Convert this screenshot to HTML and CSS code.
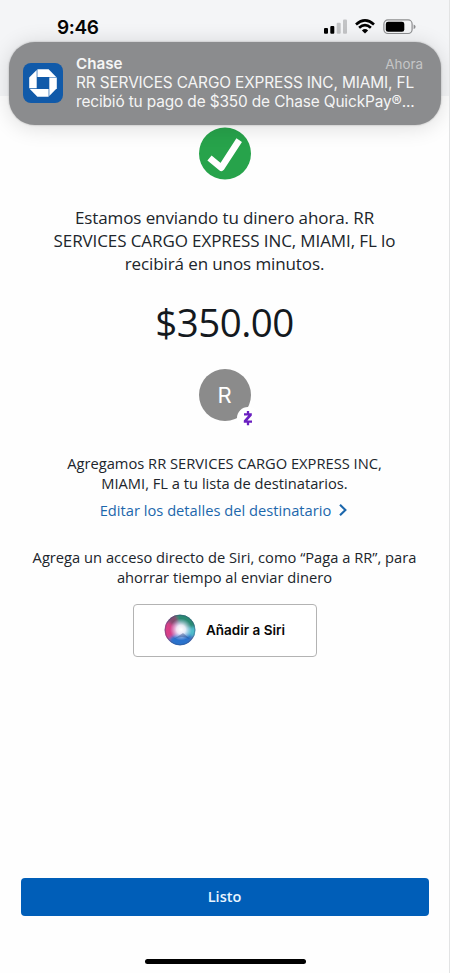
FILE: index.html
```html
<!DOCTYPE html>
<html lang="es">
<head>
<meta charset="utf-8">
<meta name="viewport" content="width=device-width, initial-scale=1">
<title>Chase</title>
<link rel="stylesheet" href="styles.css">
</head>
<body>
<div class="screen">
  <header class="status">
    <span class="time">9:46</span>
    <svg class="indicators" width="94" height="18" viewBox="0 0 94 18">
      <rect x="1" y="10" width="4" height="5.7" rx="1"/>
      <rect x="7.3" y="8" width="4" height="7.7" rx="1"/>
      <g fill="#c3c4c6"><rect x="13.7" y="4.7" width="4" height="11" rx="1"/><rect x="20" y="1.5" width="4" height="14.2" rx="1"/></g>
      <g fill="none" stroke="#000" stroke-width="2.7"><path d="M33 6.4Q42 -1.5 51 6.4"/><path d="M36.1 9.8Q42 4.6 47.9 9.8"/></g>
      <path d="M38.9 12.4Q42 9.8 45.1 12.4L42 15.6Z"/>
      <rect x="60.9" y="1.9" width="28.2" height="13.6" rx="4" fill="none" stroke="#8d8e90" stroke-width="1.2"/>
      <rect x="62.8" y="3.7" width="18.5" height="10" rx="2.3"/>
      <path d="M90.6 6.4Q92.6 7 92.6 8.7T90.6 11Z" fill="#8d8e90"/>
    </svg>
  </header>

  <section class="notification">
    <svg class="app-icon" width="40" height="40" viewBox="0 0 40 40">
      <rect width="40" height="40" rx="8" fill="#115aa9"/>
      <g fill="#fff">
        <path d="M14.4 6.2H25.6L33.2 13.9H14.4Z"/>
        <path d="M33.8 14.6V25.2L26.3 33V14.6Z"/>
        <path d="M25.6 33.7H14.4L6.8 26H25.6Z"/>
        <path d="M6.2 25.2V14.6L13.7 6.9V25.2Z"/>
      </g>
    </svg>
    <div class="note-text">
      <div class="note-head"><strong>Chase</strong><span class="when">Ahora</span></div>
      <div class="note-line">RR SERVICES CARGO EXPRESS INC, MIAMI, FL</div>
      <div class="note-line">recibió tu pago de $350 de Chase QuickPay®...</div>
    </div>
  </section>

  <main class="content">
    <svg class="check" width="52" height="53" viewBox="0 0 52 53">
      <circle cx="26" cy="26.5" r="26" fill="#27a34b"/>
      <path d="M10.5 31L22.3 40.7L40.2 13.1" fill="none" stroke="#fff" stroke-width="6.6" stroke-linejoin="round"/>
    </svg>
    <p class="message">
      <span>Estamos enviando tu dinero ahora. RR</span>
      <span>SERVICES CARGO EXPRESS INC, MIAMI, FL lo</span>
      <span>recibirá en unos minutos.</span>
    </p>
    <div class="amount">$350.00</div>
    <div class="avatar">R
      <svg class="zelle" width="22" height="22" viewBox="0 0 22 22">
        <circle cx="11" cy="11" r="11" fill="#fff"/>
        <path d="M7 6.2H14.8V8.6L10.4 13.5H15V15.8H6.8V13.4L11.2 8.5H7Z" fill="#6a1fc0"/>
        <path d="M11 4V7M11 15V18.2" fill="none" stroke="#6a1fc0" stroke-width="2.3"/>
      </svg>
    </div>
    <p class="detail added">
      <span>Agregamos RR SERVICES CARGO EXPRESS INC,</span>
      <span>MIAMI, FL a tu lista de destinatarios.</span>
    </p>
    <a class="edit"><span>Editar los detalles del destinatario</span>
      <svg width="10" height="14" viewBox="0 0 10 14"><path d="M2 1.8L7.4 7L2 12.2" fill="none" stroke="#1c67ac" stroke-width="2.1"/></svg>
    </a>
    <p class="detail shortcut">
      <span>Agrega un acceso directo de Siri, como “Paga a RR”, para</span>
      <span>ahorrar tiempo al enviar dinero</span>
    </p>
    <button class="siri">
      <svg width="32" height="32" viewBox="0 0 32 32">
        <defs>
          <clipPath id="orb"><circle cx="16" cy="16" r="15.3"/></clipPath>
          <filter id="soft" x="-50%" y="-50%" width="200%" height="200%"><feGaussianBlur stdDeviation="1.6"/></filter>
          <radialGradient id="glow"><stop offset="0" stop-color="#fff"/><stop offset=".4" stop-color="#f8f4fe" stop-opacity=".9"/><stop offset="1" stop-color="#cdd6ff" stop-opacity="0"/></radialGradient>
        </defs>
        <g clip-path="url(#orb)">
          <rect width="32" height="32" fill="#6a6fae"/>
          <g filter="url(#soft)">
            <path d="M-3 8L9 7L17 16L9 26L-3 26Z" fill="#d93f88"/>
            <path d="M9 -3H26L35 14L18 15Z" fill="#2a8a73"/>
            <path d="M17 15L35 12V23L22 22Z" fill="#4fbccb"/>
            <path d="M5 24L16 18L28 22L24 35H9Z" fill="#2a72cc"/>
            <path d="M2 3L11 -1L15 10L7 11Z" fill="#854b70"/>
          </g>
          <circle cx="17" cy="15.5" r="11" fill="url(#glow)"/>
          <path d="M10 25L19 19L26 25Q18 21 10 25" fill="#203f7b" opacity=".4"/>
        </g>
        <circle cx="16" cy="16" r="14.8" fill="none" stroke="#344b72" stroke-opacity=".4"/>
      </svg>
      <span>Añadir a Siri</span>
    </button>
  </main>

  <footer class="footer">
    <button class="done">Listo</button>
    <div class="home"></div>
  </footer>
</div>
</body>
</html>
```
FILE: styles.css
```css
* { box-sizing: border-box; }
body { margin: 0; background: #fff; }
p { margin: 0; }
.screen {
  position: relative;
  display: flex;
  flex-direction: column;
  width: 450px;
  height: 973px;
  overflow: hidden;
  border-right: 1px solid #e2e3e4;
  background: #fefefe;
  font-family: "Open Sans", sans-serif;
  color: #20252b;
}
.status {
  flex: none;
  display: flex;
  justify-content: space-between;
  align-items: flex-start;
  height: 96px;
  padding: 18px 30px 0 57px;
  background: #f4f5f7;
}
.time {
  font: 600 19px/19px Inter, sans-serif;
  letter-spacing: -0.4px;
  color: #050505;
}
.indicators { margin-right: 2px; }
.notification {
  position: absolute;
  z-index: 2;
  top: 42px;
  left: 9px;
  display: flex;
  width: 432px;
  height: 83px;
  padding: 12px 18px 0 14px;
  border-radius: 26px;
  background: #8b8c8e;
  box-shadow: 0 0 2px rgba(0,0,0,.3), 0 2px 22px rgba(0,0,0,.14);
  font-family: Inter, sans-serif;
  color: #f5f5f5;
}
.app-icon { flex: none; margin: 9px 13px 0 0; }
.note-text { flex: 1; white-space: nowrap; }
.note-head { display: flex; justify-content: space-between; height: 19px; line-height: 19px; font-size: 15.2px; }
.note-head strong { font-weight: 600; }
.when { font-size: 13.4px; line-height: 21px; color: #c5c6c7; }
.note-line { line-height: 19px; font-size: 15.4px; letter-spacing: -0.13px; }
.content { flex: 1; display: flex; flex-direction: column; align-items: center; }
.check { display: block; margin-top: 31px; }
.message, .detail { text-align: center; white-space: nowrap; }
.message span, .detail span { display: block; }
.message { margin-top: 26px; font-size: 17px; line-height: 23px; letter-spacing: -0.1px; }
.amount { margin-top: 20px; font-size: 38.5px; line-height: 54px; letter-spacing: -0.5px; color: #14191e; }
.avatar {
  position: relative;
  width: 52px;
  height: 52px;
  margin-top: 20px;
  border-radius: 50%;
  background: #8b8b8b;
  color: #fff;
  font: 400 22px/53px Inter, sans-serif;
  text-align: center;
}
.zelle { position: absolute; left: 38px; top: 38px; }
.detail { font-size: 14.7px; line-height: 20px; }
.added { margin-top: 32px; }
.edit {
  display: flex;
  align-items: center;
  gap: 7px;
  margin-top: 7px;
  padding-right: 1px;
  font-size: 14.7px;
  line-height: 20px;
  color: #1c67ac;
  white-space: nowrap;
}
.shortcut { margin-top: 27px; }
.siri {
  display: flex;
  align-items: center;
  justify-content: center;
  gap: 10px;
  width: 184px;
  height: 53px;
  margin-top: 17px;
  padding: 0 0 1px;
  border: 1px solid #b3b3b3;
  border-radius: 4px;
  background: #fff;
  font: 600 13.5px/20px Inter, sans-serif;
  color: #080808;
}
.footer { flex: none; display: flex; flex-direction: column; align-items: center; height: 95px; }
.done {
  width: 408px;
  height: 38px;
  border: 0;
  border-radius: 4px;
  background: #005eb8;
  color: #e9f5ff;
  font: 600 14.5px/20px "Open Sans", sans-serif;
}
.home { width: 161px; height: 5px; margin: 43px 0 0 1px; border-radius: 3px; background: #000; }
```
